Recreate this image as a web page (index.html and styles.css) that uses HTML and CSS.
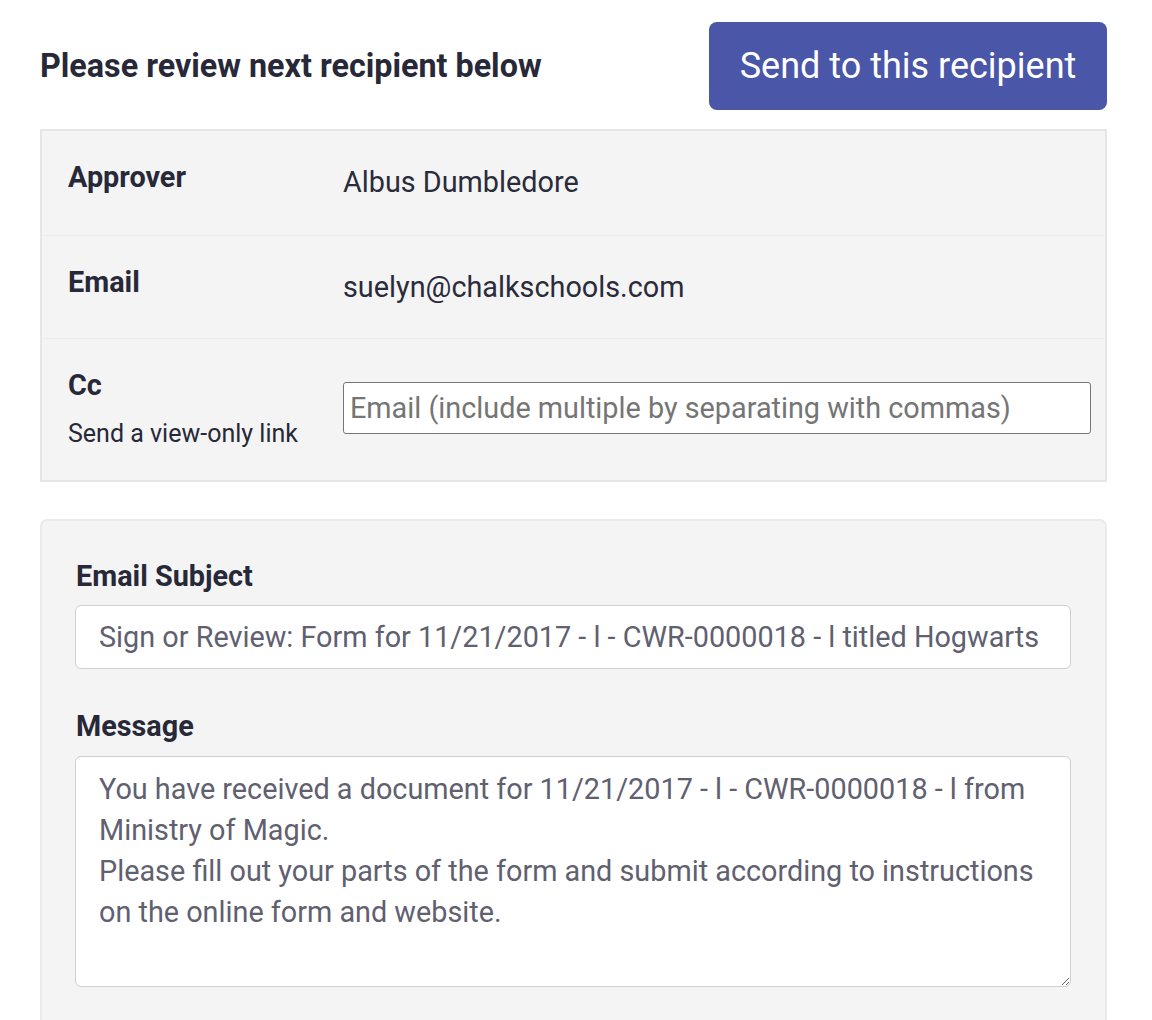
FILE: index.html
```html
<!DOCTYPE html>
<html lang="en">
<head>
<meta charset="utf-8">
<title>Review recipient</title>
<link rel="stylesheet" href="styles.css">
</head>
<body>
<div class="page">
  <div class="header">
    <h2 class="title">Please review next recipient below</h2>
    <button class="send-btn" type="button">Send to this recipient</button>
  </div>

  <div class="recipient">
    <div class="row row-first">
      <div class="label-col"><div class="label">Approver</div></div>
      <div class="value">Albus Dumbledore</div>
    </div>
    <div class="row">
      <div class="label-col"><div class="label">Email</div></div>
      <div class="value">suelyn@chalkschools.com</div>
    </div>
    <div class="row row-cc">
      <div class="label-col">
        <div class="label">Cc</div>
        <div class="sub">Send a view-only link</div>
      </div>
      <input class="cc-input" type="text" placeholder="Email (include multiple by separating with commas)">
    </div>
  </div>

  <div class="compose">
    <label class="field-label" for="subject">Email Subject</label>
    <input id="subject" class="subject-input" type="text" value="Sign or Review: Form for 11/21/2017 - l - CWR-0000018 - l titled Hogwarts (School Form)">
    <label class="field-label msg-label" for="message">Message</label>
    <textarea id="message" class="message-input">You have received a document for 11/21/2017 - l - CWR-0000018 - l from Ministry of Magic.
Please fill out your parts of the form and submit according to instructions on the online form and website.</textarea>
  </div>
</div>
</body>
</html>
```

FILE: styles.css
```css
* { box-sizing: border-box; }

html, body {
  margin: 0;
  padding: 0;
  background: #ffffff;
  font-family: Roboto, "Liberation Sans", Arial, sans-serif;
  color: #272838;
}

.page {
  padding: 22px 45px 0 40px;
}

.header {
  display: flex;
  align-items: center;
  justify-content: space-between;
  height: 88px;
}

.title {
  margin: 0;
  font-size: 32.3px;
  font-weight: 700;
  color: #272838;
}

.send-btn {
  width: 398px;
  height: 88px;
  background: #4a56a8;
  color: #ffffff;
  border: none;
  border-radius: 8px;
  font-family: Roboto, "Liberation Sans", Arial, sans-serif;
  font-size: 36px;
  padding: 0;
}

.recipient {
  margin-top: 19px;
  background: #f4f4f4;
  border: 2px solid #e6e6e6;
}

.row {
  display: flex;
  align-items: flex-start;
  padding: 28px 14px 0 26px;
  border-top: 1px solid #ececec;
  height: 103px;
}

.row-first {
  border-top: none;
  height: 104px;
}

.row-cc {
  height: 142px;
}

.label-col {
  width: 275px;
  flex: none;
}

.label {
  font-size: 28.8px;
  font-weight: 700;
  line-height: 36px;
  color: #272838;
}

.value {
  font-size: 28.8px;
  line-height: 36px;
  margin-top: 5px;
  color: #2a2b3b;
}

.sub {
  margin-top: 16px;
  font-size: 25px;
  line-height: 30px;
  color: #272838;
}

.cc-input {
  flex: 1;
  height: 52px;
  margin-top: 15px;
  border: 1px solid #767676;
  border-radius: 3px;
  background: #ffffff;
  padding: 0 6px;
  font-family: Roboto, "Liberation Sans", Arial, sans-serif;
  font-size: 28.8px;
  color: #333;
}

.cc-input::placeholder {
  color: #757575;
}

.compose {
  margin-top: 37px;
  background: #f4f4f4;
  border: 2px solid #ebebeb;
  border-bottom: none;
  border-radius: 7px 7px 0 0;
  padding: 37px 34px 40px 33px;
}

.field-label {
  display: block;
  font-size: 28.8px;
  font-weight: 700;
  line-height: 36px;
  color: #272838;
  padding-left: 1px;
}

.subject-input {
  display: block;
  width: 100%;
  height: 64px;
  margin-top: 11px;
  border: 1px solid #cfcfd4;
  border-radius: 6px;
  background: #ffffff;
  padding: 0 23px;
  font-family: Roboto, "Liberation Sans", Arial, sans-serif;
  font-size: 28.8px;
  color: #5f6070;
}

.msg-label {
  margin-top: 39px;
}

.message-input {
  display: block;
  width: 100%;
  height: 231px;
  margin-top: 12px;
  border: 1px solid #cfcfd4;
  border-radius: 6px;
  background: #ffffff;
  padding: 12px 23px;
  font-family: Roboto, "Liberation Sans", Arial, sans-serif;
  font-size: 28.8px;
  line-height: 41px;
  color: #5f6070;
  resize: vertical;
}
```
